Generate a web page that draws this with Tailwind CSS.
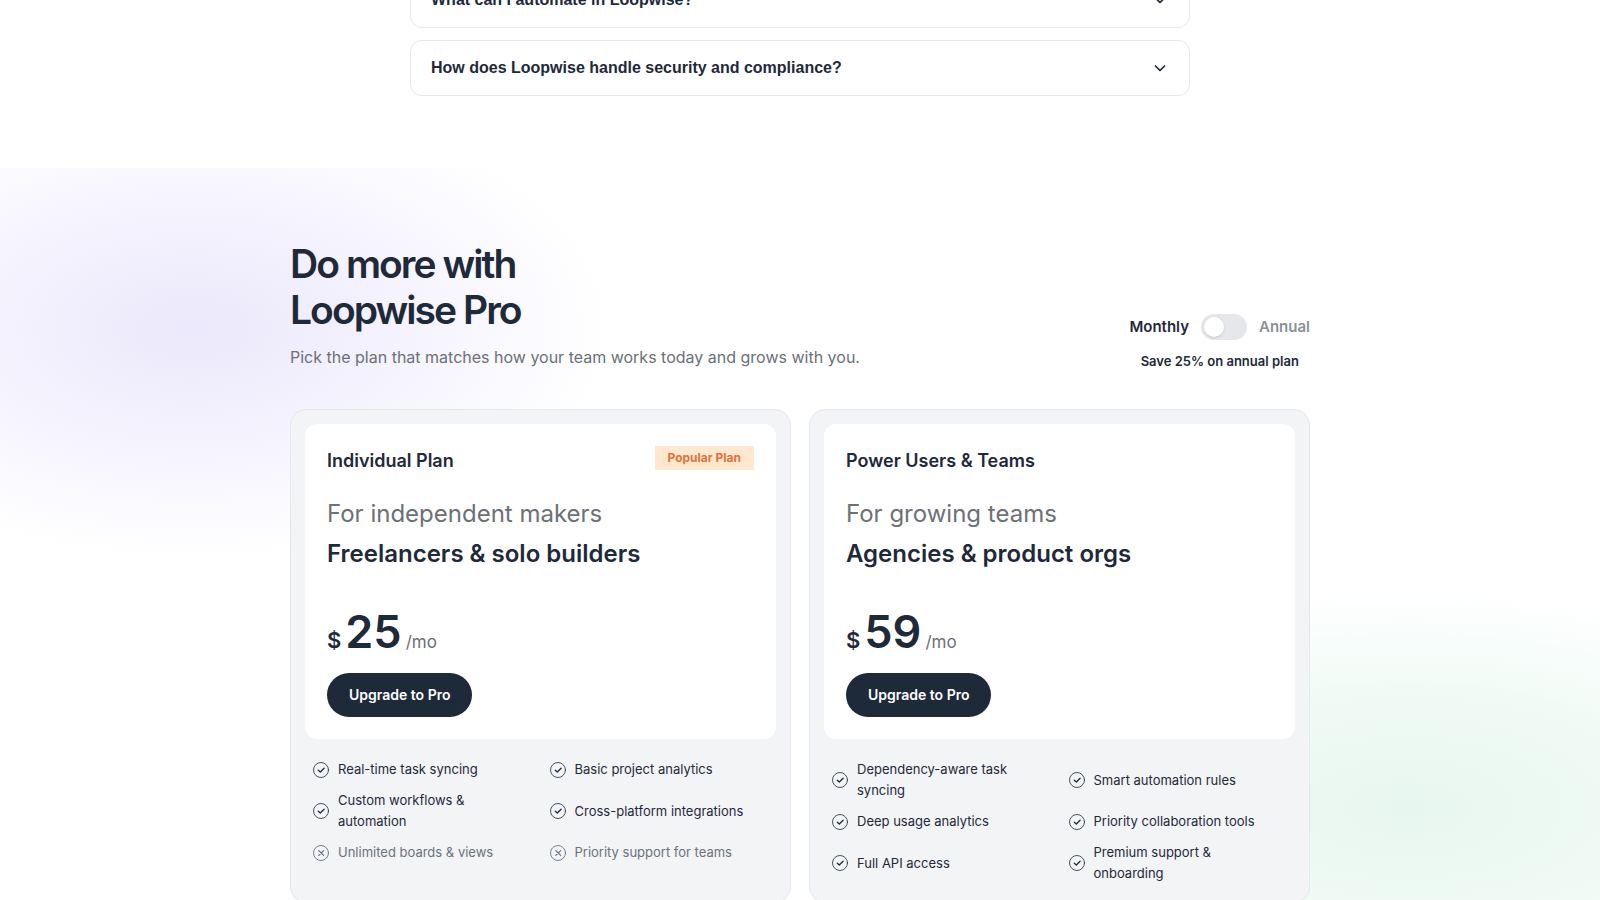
<!DOCTYPE html>
<html lang="en">
<head>
    <meta charset="UTF-8">
    <meta name="viewport" content="width=device-width, initial-scale=1.0">
    <title>Loopwise - Pricing</title>
    <script src="https://cdn.jsdelivr.net/npm/@tailwindcss/browser@4"></script>
</head>
<body class="h-screen overflow-hidden bg-white font-[Inter,sans-serif] text-gray-800">

    <!-- FAQ -->
    <section class="mx-auto -mt-7 flex max-w-[780px] flex-col gap-3 pb-[72px] font-['Liberation_Sans',sans-serif]">
        <button type="button" aria-expanded="false" class="flex h-14 w-full items-center justify-between rounded-xl border border-gray-200 px-5 text-left font-bold">
            <span>What can I automate in Loopwise?</span>
            <svg class="size-[18px]" viewBox="0 0 18 18" fill="none" stroke="currentColor" stroke-width="1.7" stroke-linecap="round" stroke-linejoin="round"><path d="M4.5 7 9 11.5 13.5 7"/></svg>
        </button>
        <button type="button" aria-expanded="false" class="flex h-14 w-full items-center justify-between rounded-xl border border-gray-200 px-5 text-left font-bold">
            <span>How does Loopwise handle security and compliance?</span>
            <svg class="size-[18px]" viewBox="0 0 18 18" fill="none" stroke="currentColor" stroke-width="1.7" stroke-linecap="round" stroke-linejoin="round"><path d="M4.5 7 9 11.5 13.5 7"/></svg>
        </button>
    </section>

    <!-- Pricing -->
    <section class="bg-[radial-gradient(420px_230px_at_12%_160px,#ebe8fb,#f5f3fe_50%,transparent),radial-gradient(480px_220px_at_88%_640px,#e7f6ef,#f1fbf6_55%,transparent)] px-6 pt-[73px] pb-20">
        <div class="mx-auto max-w-[1020px]">

            <div class="mb-[39px] flex items-end justify-between">
                <div>
                    <h2 class="text-[39px] leading-[46px] font-semibold tracking-tighter">Do more with<br>Loopwise Pro</h2>
                    <p class="mt-[11px] text-base leading-[26px] text-[#6c7077]">Pick the plan that matches how your team works today and grows with you.</p>
                </div>
                <div class="flex flex-col items-center gap-3">
                    <div class="flex items-center gap-3 text-[15px] font-semibold">
                        <label for="billing">Monthly</label>
                        <input id="billing" type="checkbox" role="switch" aria-label="Annual billing" class="h-[26px] w-[46px] appearance-none rounded-full bg-gray-200 p-[3px] before:block before:size-5 before:rounded-full before:bg-white before:shadow-sm checked:bg-gray-800 checked:before:ml-5">
                        <label for="billing" class="text-[#8d9095]">Annual</label>
                    </div>
                    <p class="text-[13px] leading-[18px] font-semibold">Save 25% on annual plan</p>
                </div>
            </div>

            <div class="grid grid-cols-2 gap-[18px]">
                <!-- Individual -->
                <article class="rounded-2xl border border-gray-200 bg-gray-100 p-3.5 pb-[18px]">
                    <div class="rounded-xl bg-white p-[22px]">
                        <div class="flex items-start justify-between">
                            <h3 class="text-lg leading-[30px] font-semibold">Individual Plan</h3>
                            <span class="bg-[#ffe8cf] px-[13px] text-xs leading-6 font-bold text-[#e07335]">Popular Plan</span>
                        </div>
                        <p class="mt-[18px] text-2xl leading-10 text-[#6c7077]">For independent makers</p>
                        <p class="text-2xl leading-10 font-semibold">Freelancers &amp; solo builders</p>
                        <p class="mt-[30px] flex items-baseline gap-1">
                            <span class="text-[22px] font-semibold">$</span>
                            <span class="text-[45px] leading-[55px] font-semibold">25</span>
                            <span class="text-[17px] text-[#6c7077]">/mo</span>
                        </p>
                        <button type="button" class="mt-3.5 h-11 rounded-full bg-gray-800 px-[22px] text-sm font-semibold text-white">Upgrade to Pro</button>
                    </div>
                    <ul class="mt-5 grid grid-cols-2 gap-x-[18px] gap-y-2.5 px-2 text-[13px] leading-[21px]">
                        <li class="flex items-center gap-[9px] pr-3">
                            <svg class="size-4 shrink-0" viewBox="0 0 16 16" fill="none" stroke="currentColor" stroke-linecap="round" stroke-linejoin="round"><circle cx="8" cy="8" r="7.5" stroke-width=".8"/><path stroke-width="1.3" d="m5.3 8.2 2 1.8 3.8-3.8"/></svg>
                            Real-time task syncing
                        </li>
                        <li class="flex items-center gap-[9px] pr-3">
                            <svg class="size-4 shrink-0" viewBox="0 0 16 16" fill="none" stroke="currentColor" stroke-linecap="round" stroke-linejoin="round"><circle cx="8" cy="8" r="7.5" stroke-width=".8"/><path stroke-width="1.3" d="m5.3 8.2 2 1.8 3.8-3.8"/></svg>
                            Basic project analytics
                        </li>
                        <li class="flex items-center gap-[9px] pr-3">
                            <svg class="size-4 shrink-0" viewBox="0 0 16 16" fill="none" stroke="currentColor" stroke-linecap="round" stroke-linejoin="round"><circle cx="8" cy="8" r="7.5" stroke-width=".8"/><path stroke-width="1.3" d="m5.3 8.2 2 1.8 3.8-3.8"/></svg>
                            Custom workflows &amp; automation
                        </li>
                        <li class="flex items-center gap-[9px] pr-3">
                            <svg class="size-4 shrink-0" viewBox="0 0 16 16" fill="none" stroke="currentColor" stroke-linecap="round" stroke-linejoin="round"><circle cx="8" cy="8" r="7.5" stroke-width=".8"/><path stroke-width="1.3" d="m5.3 8.2 2 1.8 3.8-3.8"/></svg>
                            Cross-platform integrations
                        </li>
                        <li class="flex items-center gap-[9px] pr-3 text-gray-500">
                            <svg class="size-4 shrink-0" viewBox="0 0 16 16" fill="none" stroke="currentColor" stroke-linecap="round"><circle cx="8" cy="8" r="7.5" stroke-width=".9"/><path stroke-width="1.3" d="m5.8 5.6 4.8 4.8m0-4.8-4.8 4.8"/></svg>
                            Unlimited boards &amp; views
                        </li>
                        <li class="flex items-center gap-[9px] pr-3 text-gray-500">
                            <svg class="size-4 shrink-0" viewBox="0 0 16 16" fill="none" stroke="currentColor" stroke-linecap="round"><circle cx="8" cy="8" r="7.5" stroke-width=".9"/><path stroke-width="1.3" d="m5.8 5.6 4.8 4.8m0-4.8-4.8 4.8"/></svg>
                            Priority support for teams
                        </li>
                    </ul>
                </article>

                <!-- Teams -->
                <article class="rounded-2xl border border-gray-200 bg-gray-100 p-3.5 pb-[18px]">
                    <div class="rounded-xl bg-white p-[22px]">
                        <h3 class="text-lg leading-[30px] font-semibold">Power Users &amp; Teams</h3>
                        <p class="mt-[18px] text-2xl leading-10 text-[#6c7077]">For growing teams</p>
                        <p class="text-2xl leading-10 font-semibold">Agencies &amp; product orgs</p>
                        <p class="mt-[30px] flex items-baseline gap-1">
                            <span class="text-[22px] font-semibold">$</span>
                            <span class="text-[45px] leading-[55px] font-semibold">59</span>
                            <span class="text-[17px] text-[#6c7077]">/mo</span>
                        </p>
                        <button type="button" class="mt-3.5 h-11 rounded-full bg-gray-800 px-[22px] text-sm font-semibold text-white">Upgrade to Pro</button>
                    </div>
                    <ul class="mt-5 grid grid-cols-2 gap-x-[18px] gap-y-2.5 px-2 text-[13px] leading-[21px]">
                        <li class="flex items-center gap-[9px] pr-3">
                            <svg class="size-4 shrink-0" viewBox="0 0 16 16" fill="none" stroke="currentColor" stroke-linecap="round" stroke-linejoin="round"><circle cx="8" cy="8" r="7.5" stroke-width=".8"/><path stroke-width="1.3" d="m5.3 8.2 2 1.8 3.8-3.8"/></svg>
                            Dependency-aware task syncing
                        </li>
                        <li class="flex items-center gap-[9px] pr-3">
                            <svg class="size-4 shrink-0" viewBox="0 0 16 16" fill="none" stroke="currentColor" stroke-linecap="round" stroke-linejoin="round"><circle cx="8" cy="8" r="7.5" stroke-width=".8"/><path stroke-width="1.3" d="m5.3 8.2 2 1.8 3.8-3.8"/></svg>
                            Smart automation rules
                        </li>
                        <li class="flex items-center gap-[9px] pr-3">
                            <svg class="size-4 shrink-0" viewBox="0 0 16 16" fill="none" stroke="currentColor" stroke-linecap="round" stroke-linejoin="round"><circle cx="8" cy="8" r="7.5" stroke-width=".8"/><path stroke-width="1.3" d="m5.3 8.2 2 1.8 3.8-3.8"/></svg>
                            Deep usage analytics
                        </li>
                        <li class="flex items-center gap-[9px] pr-3">
                            <svg class="size-4 shrink-0" viewBox="0 0 16 16" fill="none" stroke="currentColor" stroke-linecap="round" stroke-linejoin="round"><circle cx="8" cy="8" r="7.5" stroke-width=".8"/><path stroke-width="1.3" d="m5.3 8.2 2 1.8 3.8-3.8"/></svg>
                            Priority collaboration tools
                        </li>
                        <li class="flex items-center gap-[9px] pr-3">
                            <svg class="size-4 shrink-0" viewBox="0 0 16 16" fill="none" stroke="currentColor" stroke-linecap="round" stroke-linejoin="round"><circle cx="8" cy="8" r="7.5" stroke-width=".8"/><path stroke-width="1.3" d="m5.3 8.2 2 1.8 3.8-3.8"/></svg>
                            Full API access
                        </li>
                        <li class="flex items-center gap-[9px] pr-3">
                            <svg class="size-4 shrink-0" viewBox="0 0 16 16" fill="none" stroke="currentColor" stroke-linecap="round" stroke-linejoin="round"><circle cx="8" cy="8" r="7.5" stroke-width=".8"/><path stroke-width="1.3" d="m5.3 8.2 2 1.8 3.8-3.8"/></svg>
                            Premium support &amp; onboarding
                        </li>
                    </ul>
                </article>
            </div>
        </div>
    </section>
</body>
</html>
